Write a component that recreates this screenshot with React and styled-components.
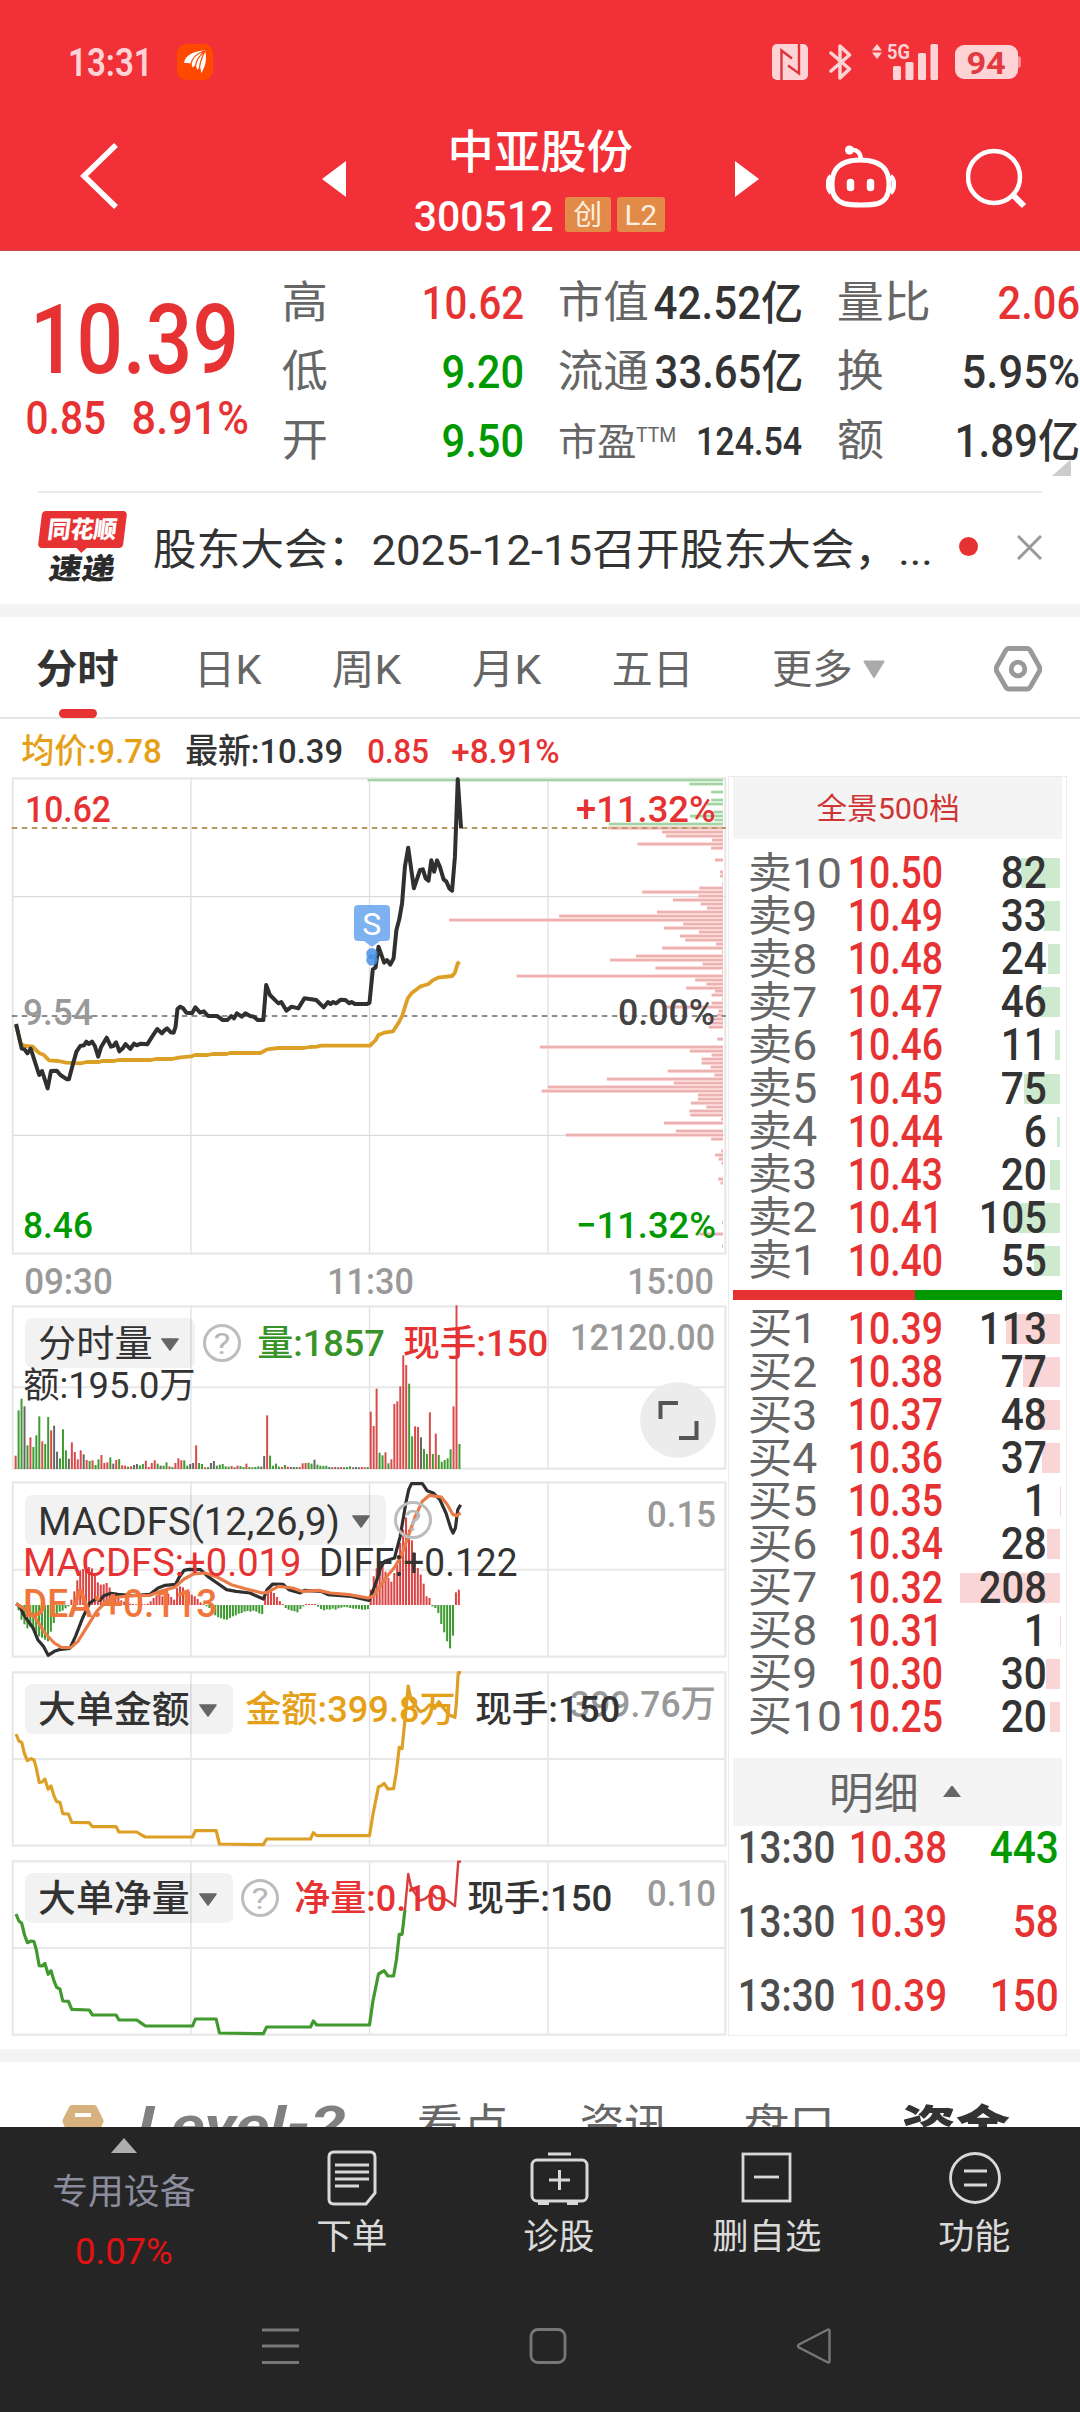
import React, { useLayoutEffect, useRef, useState } from "react";
import styled, { createGlobalStyle } from "styled-components";

const RED = "#e63232";
const GREEN = "#009900";
const INK = "#333333";
const GREY = "#666666";
const SOFT = "#999999";
const AMBER = "#e6a017";

const Global = createGlobalStyle`
  * { box-sizing: border-box; }
  body { margin: 0; background: #fff; }
  body, #root { font-family: Roboto, "Noto Sans CJK SC", sans-serif; }
`;

/* ---------- condensed text that fills a given width ---------- */

const FitBox = styled.span`
  display: block;
  flex: none;
  width: ${(p) => p.$w}px;
  height: ${(p) => Math.round(p.$size * 1.2)}px;
  line-height: ${(p) => Math.round(p.$size * 1.2)}px;
  margin-left: ${(p) => p.$ml || 0}px;
  font-size: ${(p) => p.$size}px;
  font-weight: ${(p) => p.$weight || 400};
  font-style: ${(p) => (p.$italic ? "italic" : "normal")};
  color: ${(p) => p.$color || INK};
  white-space: nowrap;
`;

const FitInner = styled.span`
  display: inline-block;
  transform-origin: 0 50%;
`;

function Fit({ w, size, weight, color, ml, italic, children }) {
  const ref = useRef(null);
  const [k, setK] = useState(1);
  const bearing = size * 0.052;
  useLayoutEffect(() => {
    const natural = ref.current.offsetWidth;
    if (natural) setK((w + bearing * 1.8) / natural);
  }, [w, bearing]);
  return (
    <FitBox $w={w} $size={size} $weight={weight} $color={color} $ml={ml} $italic={italic}>
      <FitInner ref={ref} style={{ transform: `translate(${-bearing}px, 1px) scaleX(${k})` }}>
        {children}
      </FitInner>
    </FitBox>
  );
}

/* ---------- page ---------- */

const Page = styled.div`
  width: 1080px;
  height: 2412px;
  overflow: hidden;
  background: #fff;
  display: flex;
  flex-direction: column;
`;

const Header = styled.header`
  flex: none;
  height: 251px;
  background: #f23037;
  border-bottom: 1px solid #cf4a50;
`;

const StatusBar = styled.div`
  display: flex;
  align-items: center;
  height: 124px;
  padding: 0 62px 0 70px;
`;

const AppBadge = styled.span`
  display: flex;
  width: 36px;
  height: 36px;
  margin-left: 26px;
  border-radius: 9px;
  background: #ff4800;
`;

const StatusIcons = styled.div`
  display: flex;
  align-items: center;
  margin-left: auto;
`;

const Battery = styled.span`
  position: relative;
  display: flex;
  align-items: center;
  justify-content: center;
  width: 63px;
  height: 34px;
  margin-left: 17px;
  border-radius: 9px;
  background: #fed3d5;
  &::after {
    content: "";
    position: absolute;
    right: -3px;
    top: 11px;
    width: 3px;
    height: 12px;
    border-radius: 0 4px 4px 0;
    background: #f98f93;
  }
`;

const TitleBar = styled.div`
  display: flex;
  align-items: flex-start;
  height: 126px;
  padding-left: 79px;
  svg { flex: none; display: block; }
`;

const TitleIcon = styled.div`
  margin: ${(p) => p.$mt}px 0 0 ${(p) => p.$ml}px;
`;

const TitleBlock = styled.div`
  display: flex;
  flex-direction: column;
  align-items: center;
  width: 251px;
  margin-left: 69px;
  margin-right: 1px;
`;

const CodeRow = styled.div`
  display: flex;
  align-items: center;
  height: 53px;
  margin-top: 9px;
`;

const Mark = styled.span`
  display: flex;
  align-items: center;
  justify-content: center;
  width: ${(p) => p.$w}px;
  height: 35px;
  margin-left: ${(p) => p.$ml}px;
  border-radius: 3px;
  background: #e28b48;
`;

/* ---------- quote ---------- */

const Quote = styled.section`
  flex: none;
  display: flex;
  height: 240px;
  position: relative;
`;

const LastPrice = styled.div`
  width: 284px;
  padding-top: 31px;
`;

const BigPrice = styled.div`
  padding-left: 35px;
  height: 108px;
`;

const ChangeRow = styled.div`
  display: flex;
  padding-left: 28px;
`;

const Stats = styled.div`
  width: ${(p) => p.$w}px;
  margin-right: ${(p) => p.$mr || 0}px;
  padding-top: 17px;
`;

const Stat = styled.div`
  display: flex;
  align-items: center;
  justify-content: space-between;
  height: 69px;
`;

const LabelGroup = styled.div`
  display: flex;
  align-items: center;
`;

const Super = styled.span`
  padding-bottom: 14px;
`;

const Corner = styled.svg`
  position: absolute;
  right: 9px;
  top: 208px;
`;

const Notice = styled.section`
  flex: none;
  display: flex;
  align-items: center;
  height: 113px;
  margin: 0 38px;
  border-top: 2px solid #ececec;
`;

const Brand = styled.div`
  width: 89px;
  height: 78px;
  flex: none;
  display: flex;
  flex-direction: column;
  align-items: center;
  margin-top: -4px;
`;

const BrandTop = styled.div`
  position: relative;
  display: flex;
  align-items: center;
  justify-content: center;
  width: 85px;
  height: 37px;
  margin-top: 3px;
  border-radius: 4px;
  background: ${RED};
  transform: skewX(-7deg);
  &::after {
    content: "";
    position: absolute;
    left: 38px;
    top: 36px;
    border: 6px solid transparent;
    border-top-color: ${RED};
    border-bottom: 0;
  }
`;

const BrandBottom = styled.div`
  margin-top: 3px;
  transform: skewX(-9deg);
`;

const Dot = styled.span`
  flex: none;
  width: 19px;
  height: 19px;
  margin: 0 39px 4px 28px;
  border-radius: 50%;
  background: ${RED};
`;

const CloseIcon = styled.svg`
  flex: none;
  margin-bottom: 3px;
`;

const Band = styled.div`
  flex: none;
  height: 13px;
  background: #f4f4f4;
`;

const Tabs = styled.nav`
  flex: none;
  display: flex;
  height: 102px;
  padding-left: 38px;
  align-items: center;
  border-bottom: 2px solid #e6e6e6;
`;

const Tab = styled.div`
  position: relative;
  display: flex;
  align-items: center;
  height: 100px;
  padding-top: 4px;
  margin-left: ${(p) => p.$ml || 0}px;
  &::after {
    content: "";
    display: ${(p) => (p.$active ? "block" : "none")};
    position: absolute;
    left: 21px;
    bottom: -1px;
    width: 38px;
    height: 9px;
    border-radius: 5px;
    background: ${RED};
  }
`;

const Legend = styled.div`
  flex: none;
  display: flex;
  align-items: center;
  height: 57px;
  padding: 6px 0 0 23px;
`;

const Board = styled.main`
  flex: none;
  display: flex;
  height: 1273px;
`;

/* ---------- charts ---------- */

const Charts = styled.div`
  width: 714px;
  margin: 2px 2px 0 12px;
`;

const Panel = styled.div`
  position: relative;
  height: ${(p) => p.$h}px;
  margin-top: ${(p) => p.$mt || 0}px;
`;

const Canvas = styled.svg`
  display: block;
  width: 714px;
  height: 100%;
  overflow: visible;
`;

const TextLayer = styled.div`
  position: absolute;
  inset: 0;
  padding: ${(p) => p.$pt}px 12px 0 13px;
  display: flex;
  flex-direction: column;
`;

const Spread = styled.div`
  display: flex;
  justify-content: space-between;
  margin-top: ${(p) => p.$mt || 0}px;
`;

const TimeAxis = styled.div`
  display: flex;
  justify-content: space-between;
  align-items: center;
  height: 52px;
  padding: 2px 14px 0 14px;
`;

const Row = styled.div`
  display: flex;
  align-items: center;
  height: ${(p) => p.$h}px;
`;

const Picker = styled.div`
  display: flex;
  align-items: center;
  justify-content: space-between;
  flex: none;
  width: ${(p) => p.$w}px;
  height: 50px;
  padding: 2px 16px 0 15px;
  border-radius: 7px;
  background: rgba(0, 0, 0, 0.052);
`;

const Help = styled.span`
  display: flex;
  align-items: center;
  justify-content: center;
  flex: none;
  width: 38px;
  height: 38px;
  margin-left: ${(p) => p.$ml}px;
  border: 3px solid #bdbdbd;
  border-radius: 50%;
`;

const AxisMax = styled.div`
  position: absolute;
  right: 12px;
  top: ${(p) => p.$top}px;
`;

const Expand = styled.button`
  position: absolute;
  right: 10px;
  top: 76px;
  width: 76px;
  height: 76px;
  padding: 0;
  border: 0;
  border-radius: 50%;
  background: #ececec;
`;

const SellFlag = styled.div`
  position: absolute;
  left: 342px;
  top: 127px;
  width: 36px;
  height: 36px;
  display: flex;
  align-items: center;
  justify-content: center;
  border-radius: 4px;
  background: #7db1f0;
  &::after {
    content: "";
    position: absolute;
    left: 10px;
    top: 36px;
    border: 8px solid transparent;
    border-top: 6px solid #7db1f0;
    border-bottom: 0;
  }
`;

/* ---------- order book ---------- */

const Book = styled.aside`
  width: 339px;
  height: 1260px;
  border: 1px solid #ebebeb;
  padding: 0 4px;
`;

const BookHead = styled.div`
  display: flex;
  align-items: center;
  height: ${(p) => p.$h}px;
  margin-top: ${(p) => p.$mt || 0}px;
  padding-top: ${(p) => p.$pt || 0}px;
  padding-left: ${(p) => p.$pl}px;
  background: #f4f4f4;
`;

const Levels = styled.div`
  margin-top: ${(p) => p.$mt}px;
`;

const Level = styled.div`
  display: flex;
  align-items: center;
  height: 43.1px;
  padding-left: 17px;
`;

const LevelName = styled.div`
  width: 100px;
`;

const Volume = styled.div`
  position: relative;
  display: flex;
  align-items: center;
  justify-content: flex-end;
  width: 119px;
  height: 43px;
  padding-right: 15px;
  isolation: isolate;
`;

const VolumeBar = styled.i`
  position: absolute;
  z-index: -1;
  right: 0;
  top: 7px;
  height: 30px;
  background: ${(p) => (p.$sell ? "#cde9ce" : "#fad5d5")};
`;

const Ratio = styled.div`
  height: 10px;
  margin-top: 8px;
  background: linear-gradient(90deg, ${RED} 55.2%, ${GREEN} 55.2%);
`;

const Trades = styled.div`
  display: flex;
  flex-direction: column;
  gap: 30px;
`;

const Trade = styled.div`
  display: flex;
  align-items: center;
  height: 44px;
  padding: 0 5px 0 7px;
  > :last-child { margin-left: auto; }
`;

/* ---------- lower part ---------- */

const SubTabs = styled.div`
  flex: none;
  display: flex;
  height: 65px;
  overflow: hidden;
  padding: 37px 0 0 62px;
`;

const Level2 = styled.div`
  margin: -5px 0 0 36px;
`;

const Dock = styled.footer`
  flex: none;
  height: 285px;
  background: #252525;
`;

const DockItems = styled.div`
  display: flex;
  height: 170px;
`;

const DeviceCell = styled.div`
  width: 248px;
  display: flex;
  flex-direction: column;
  align-items: center;
  gap: 16px;
  padding-top: 11px;
  svg { margin-bottom: 2px; }
`;

const DockItem = styled.div`
  width: ${(p) => p.$w}px;
  display: flex;
  flex-direction: column;
  align-items: center;
  gap: 8px;
  padding-top: 21px;
`;

const SystemNav = styled.div`
  display: flex;
  justify-content: space-between;
  padding: 30px 248px 0 261px;
`;

/* ---------- data ---------- */

const PRICE = "34,762 46,836 52,838 58,850 65,836 83,915 89,903 101,955 108,903 120,902 128,915 142,928 146,928 155,880 162,845 170,828 178,826 183,815 188,822 195,815 201,828 208,860 214,832 226,803 235,830 240,828 246,817 253,844 260,835 266,822 276,837 284,821 290,826 298,821 312,823 320,805 333,777 343,790 348,782 354,775 362,787 368,788 372,770 376,717 382,710 388,715 395,728 407,730 414,712 424,728 432,724 441,738 460,738 472,750 482,750 490,738 496,745 502,730 512,740 520,730 530,738 538,740 546,750 558,750 564,645 572,675 584,692 590,700 596,696 607,722 618,710 632,715 645,685 670,690 686,712 695,696 700,702 706,696 712,700 722,689 732,690 740,700 745,696 752,702 778,702 783,698 790,598 796,592 802,530 814,578 820,570 827,584 834,565 840,480 846,448 852,400 858,290 865,233 877,355 890,300 896,298 902,325 908,332 914,271 920,305 926,271 932,290 940,328 946,335 952,355 958,362 964,260 970,28 977,175";
const AVERAGE = "34,765 44,822 54,828 70,830 76,840 84,850 92,854 104,871 124,873 140,878 170,880 184,876 210,876 216,873 242,873 250,870 320,870 330,867 365,867 378,863 405,859 414,855 440,855 450,852 480,852 488,849 552,849 566,838 590,834 644,834 656,831 672,830 680,827 784,827 796,810 802,795 814,788 833,784 846,755 852,738 864,685 872,670 890,650 908,642 916,632 928,623 958,618 964,608 970,580 974,576";
const DEALS_UP = [[30,779],[42,1461],[66,1507],[90,1507],[102,1498],[126,1512],[138,1462],[150,1514],[162,1290]];
const DEALS_DOWN = [[174,1288],[186,1403],[198,1411],[210,1509],[222,1351],[234,1507],[270,1515],[306,1526],[318,1526],[342,1530],[354,1482],[366,1361],[378,1480],[390,1426],[402,1485],[414,1498],[426,1392],[438,1185],[450,952],[462,1448],[474,1407],[486,1481],[498,1441],[510,1452],[522,1517],[534,1403],[546,1530],[558,1348],[570,1293],[582,1489],[594,1389],[606,1530],[618,1095],[630,1473],[642,1497],[654,1454],[663,1515],[675,1508],[687,1530],[699,1508],[711,1405],[723,1523],[735,1520],[747,1500],[759,1508],[771,1502],[807,1520],[831,1144],[843,1462],[855,1508],[867,1487],[879,1487],[891,1506],[903,1415],[915,1514],[927,1286],[939,1428],[951,1161],[963,1148],[975,1479],[987,1479],[999,1464],[1011,1497],[1023,1461],[1035,1463],[1047,1528],[1059,1407],[1083,1432],[1095,1199],[1107,1507],[1143,1528],[1155,1515],[1167,1523],[1179,1529],[1227,1522],[1239,1527],[1359,1530],[1392,1482],[1428,1530]];

const VOLUME = "r496 g360 g325 k348 g465 r441 g470 g435 g378 r453 g461 g380 r420 k406 k484 g504 g417 g480 k505 r456 r485 r507 r480 k492 r509 g512 r510 g524 g507 r494 r518 r516 g501 k520 r509 g506 r525 r526 g529 r528 k524 k521 g525 g521 r511 r530 r518 r510 g520 k526 g526 g516 r528 g530 r518 r504 r510 g510 g526 k521 k518 r465 g518 g521 r531 g530 k518 k512 g526 g523 g521 g528 g529 r527 k531 r526 g527 g530 r520 g530 g531 g530 g528 k529 k497 r375 g496 g526 g520 g529 r530 g524 r529 k530 k530 g530 r530 r519 r518 g517 g520 k508 g523 g526 g527 g526 k530 k531 r530 k531 r530 k531 g530 g528 k531 k530 k531 r530 r531 g530 r364 r407 r295 g487 g495 r486 g519 r507 r341 r333 r288 r195 r224 g280 g438 r408 r410 k441 g476 g491 r366 g491 r430 g494 g514 g509 g504 g477 r348 r45 g461".split(" ");
const MACD = [962,990,1004,1016,1010,1020,1030,1040,1044,1050,1055,1026,1000,975,966,963,956,950,930,905,872,842,838,835,832,836,850,878,885,884,880,893,910,915,925,932,936,938,942,943,944,944,943,944,942,935,925,917,918,920,915,912,922,930,895,890,893,903,905,915,920,928,938,943,950,955,966,977,983,986,989,990,985,980,977,972,970,966,964,966,963,966,971,973,915,905,900,910,922,934,943,955,960,963,965,968,958,950,943,943,943,943,951,958,962,959,960,957,960,956,954,952,953,955,957,957,958,960,960,958,900,860,836,815,820,846,865,876,850,825,760,720,683,720,752,790,835,855,882,920,925,950,955,970,1003,1028,1055,1076,1038,908,900];
const DIFF = "34,942 42,950 50,975 60,995 70,1015 80,1050 92,1070 102,1097 115,1085 125,1080 148,1076 160,1040 175,985 190,940 203,928 212,932 220,918 235,911 250,914 280,918 318,914 335,895 350,887 372,884 380,862 390,842 400,839 425,840 440,860 460,880 480,900 500,905 530,910 540,917 558,928 566,900 578,883 600,884 612,900 636,910 645,902 680,905 695,915 745,920 782,932 790,905 800,865 806,835 815,815 836,805 848,740 860,640 866,600 872,582 895,582 905,603 918,610 932,630 945,670 955,715 960,730 965,715 970,660 976,645";
const DEA = "34,942 60,965 75,985 95,1030 115,1060 130,1073 150,1074 165,1055 185,1010 205,965 225,935 250,922 280,918 318,917 340,905 370,893 390,868 410,853 435,850 460,862 490,885 520,897 555,910 566,908 590,890 620,895 640,905 675,902 700,910 740,915 780,925 792,918 805,890 820,860 835,835 850,800 865,740 880,680 895,635 910,617 935,622 948,645 960,675 968,678 976,670";
const AMOUNT = "34,222 40,243 46,247 52,282 58,302 66,296 72,300 77,325 83,367 89,366 95,357 102,388 108,378 115,410 120,425 127,427 133,461 145,462 152,487 189,488 196,500 246,500 252,516 290,516 300,525 308,531 408,531 414,512 458,512 465,552 558,554 565,537 658,537 664,518 671,527 783,527 790,465 802,380 808,377 814,370 822,387 834,386 840,335 846,262 852,266 858,180 865,78 871,120 877,130 890,155 900,150 910,135 921,145 930,125 940,145 952,165 964,172 967,130 971,38 977,38";
const NET_DOWN = "34,762 40,783 46,790 52,825 58,848 66,843 72,845 77,870 83,917 89,918 95,910 102,943 108,932 115,965 120,982 127,987 133,1023 145,1024 152,1048 189,1050 196,1065 246,1065 252,1080 290,1080 300,1090 308,1098 408,1098 414,1077 458,1077 465,1119 558,1121 565,1101 658,1101 664,1083 671,1095 783,1095 790,1025 802,942 814,932 822,948 834,948 840,900 846,823 852,823 858,750";
const NET_UP = "858,750 865,642 871,680 877,695 890,722 900,717 915,700 925,715 940,715 952,725 964,738 971,605 977,605";

const SELLS = [["10","10.50",82],["9","10.49",33],["8","10.48",24],["7","10.47",46],["6","10.46",11],["5","10.45",75],["4","10.44",6],["3","10.43",20],["2","10.41",105],["1","10.40",55]];
const BUYS = [["1","10.39",113],["2","10.38",77],["3","10.37",48],["4","10.36",37],["5","10.35",1],["6","10.34",28],["7","10.32",208],["8","10.31",1],["9","10.30",30],["10","10.25",20]];
const TRADES = [["10.38","443",GREEN],["10.39","58",RED],["10.39","150",RED]];

/* ---------- pieces ---------- */

const Line = (p) => <polyline fill="none" strokeLinejoin="round" vectorEffect="non-scaling-stroke" {...p} />;

function Grid({ top, bottom, rows }) {
  const s = { vectorEffect: "non-scaling-stroke", stroke: "#dfdfdf", strokeWidth: 1.3 };
  return (
    <g fill="none">
      {[404.5, 783, 1161.5].map((x) => <line key={x} x1={x} x2={x} y1={top} y2={bottom} {...s} />)}
      {rows.map((y) => <line key={y} x1="25" x2="1539" y1={y} y2={y} {...s} strokeWidth={rows.length > 1 ? 1.3 : 2} stroke={rows.length > 1 ? "#dcdcdc" : "#e8e8e8"} />)}
      <rect x="27" y={top + 1} width="1510" height={bottom - top - 2} {...s} stroke="#e8e8e8" strokeWidth="2.2" />
    </g>
  );
}

function Deals({ rows, light, dark }) {
  return rows.map(([y, x]) => (
    <g key={y}>
      <rect x={x} y={y - 5} width={1532 - x} height="10.5" fill={light} />
      <rect x={x} y={y - 2.7} width={1532 - x} height="5.4" fill={dark} />
    </g>
  ));
}

const Caret = () => (
  <svg width="18" height="13" viewBox="0 0 18 13"><path d="M1 1h16L9 12z" fill="#666" stroke="#666" strokeWidth="1.6" strokeLinejoin="round" /></svg>
);

const HelpMark = ({ ml }) => (
  <Help $ml={ml}><Fit w={14} size={30} color="#b8b8b8">?</Fit></Help>
);

function LevelRow({ side, row }) {
  const [n, price, vol] = row;
  const digits = String(vol).length;
  return (
    <Level>
      <LevelName><Fit w={n === "10" ? 90 : 66} size={42} color={GREY}>{side}{n}</Fit></LevelName>
      <Fit w={91} size={44} weight={500} color={RED}>{price}</Fit>
      <Volume>
        <VolumeBar $sell={side === "卖"} style={{ width: vol * 0.48 }} />
        <Fit w={[19, 42, 64][digits - 1]} size={44} weight={500}>{vol}</Fit>
      </Volume>
    </Level>
  );
}

const statFont = { size: 46, weight: 500 };

export default function App() {
  return (
    <Page>
      <Global />
      <Header>
        <StatusBar>
          <Fit w={81} size={38} weight={600} color="#fed3d5">13:31</Fit>
          <AppBadge>
            <svg width="36" height="36" viewBox="0 0 36 36">
              <path d="M7 19C8 11 17 7 28 6.500C30 14 29 22 24 29.500C24 26 24 25 22.500 23L20.500 26L18.500 21L15.500 23.500L14.500 19.500C11 19 9 19 7 19Z" fill="#fff" />
              <path d="M27 7C19 10 15 14 14 20M28 7C22 12 19 16 18.500 22M28 7C25 13 23 18 22.500 24" stroke="#ff4800" strokeWidth="1.200" fill="none" />
            </svg>
          </AppBadge>
          <StatusIcons>
            <svg width="166" height="36" viewBox="0 0 166 36">
              <rect width="36" height="36" rx="5" fill="#fed3d5" />
              <path d="M9.500 36V6.500L20 14.500M27 0V29.500L16 21.500" fill="none" stroke="#e0323a" strokeWidth="2.400" />
              <path d="M59 9L77.500 25L68 34V2L77.500 11L59 27" fill="none" stroke="#fed3d5" strokeWidth="3.500" strokeLinejoin="round" strokeLinecap="round" />
              <path d="M100 6.500L105 0L110 6.500zM100 8.500H110L105 15z" fill="#fed3d5" />
              <g fill="#fed3d5">
                <rect x="121" y="22" width="8" height="14" rx="1.500" />
                <rect x="133.500" y="18" width="8" height="18" rx="1.500" />
                <rect x="146" y="9" width="8" height="27" rx="1.500" />
                <rect x="158.500" y="0" width="7.500" height="36" rx="1.500" />
              </g>
              <text x="115" y="15" fontSize="20" fontWeight="700" textLength="23" lengthAdjust="spacingAndGlyphs" fill="#fed3d5">5G</text>
            </svg>
            <Battery><Fit w={37} size={31} weight={700} color="#e23a41">94</Fit></Battery>
          </StatusIcons>
        </StatusBar>
        <TitleBar>
          <TitleIcon $mt={19} $ml={0}>
            <svg width="40" height="66" viewBox="0 0 40 66"><path d="M37 2L5 33L37 64" fill="none" stroke="#fff" strokeWidth="5.500" /></svg>
          </TitleIcon>
          <TitleIcon $mt={37} $ml={203}>
            <svg width="24" height="36" viewBox="0 0 24 36"><path d="M24 0V36L0 18z" fill="#fff" /></svg>
          </TitleIcon>
          <TitleBlock>
            <Fit w={181} size={46} weight={500} color="#fff">中亚股份</Fit>
            <CodeRow>
              <Fit w={136} size={43} weight={500} color="#fff">300512</Fit>
              <Mark $w={46} $ml={13}><Fit w={26} size={28} color="#fff0e0">创</Fit></Mark>
              <Mark $w={48} $ml={6}><Fit w={30} size={28} color="#fff0e0">L2</Fit></Mark>
            </CodeRow>
          </TitleBlock>
          <TitleIcon $mt={37} $ml={68}>
            <svg width="24" height="36" viewBox="0 0 24 36"><path d="M0 0V36L24 18z" fill="#fff" /></svg>
          </TitleIcon>
          <TitleIcon $mt={21} $ml={67}>
            <svg width="70" height="64" viewBox="0 0 70 64" fill="none" stroke="#fff">
              <path d="M34 15C45 15 54 17 59.500 25C62 29 63 34 63 40C63 49 60 56 52 58.500C45 60.500 25 60.500 18 58.500C10 56 6 49 6 40C6 34 7 29 9.500 25C15 17 24 15 34 15Z" strokeWidth="5" />
              <path d="M34.500 14C35 8 31 4 24 5" strokeWidth="4.500" />
              <circle cx="23.500" cy="5" r="4.500" fill="#fff" stroke="none" />
              <path d="M24.500 37.500v5M44.500 37.500v5" strokeWidth="7.500" strokeLinecap="round" />
              <path d="M5 31C1 34 1 44 5 48M64.500 31C69 34 69 44 64.500 48" strokeWidth="4.500" />
            </svg>
          </TitleIcon>
          <TitleIcon $mt={24} $ml={70}>
            <svg width="61" height="62" viewBox="0 0 61 62" fill="none" stroke="#fff" strokeWidth="4.500"><circle cx="28" cy="29" r="26" /><path d="M48 48L58 58" strokeWidth="6" /></svg>
          </TitleIcon>
        </TitleBar>
      </Header>

      <Quote>
        <LastPrice>
          <BigPrice><Fit w={200} size={96} weight={500} color={RED}>10.39</Fit></BigPrice>
          <ChangeRow>
            <Fit w={76} size={46} weight={500} color={RED}>0.85</Fit>
            <Fit w={113} size={46} weight={500} color={RED} ml={30}>8.91%</Fit>
          </ChangeRow>
        </LastPrice>
        <Stats $w={238} $mr={38}>
          <Stat><Fit w={42} size={44} color={GREY}>高</Fit><Fit w={98} {...statFont} color={RED}>10.62</Fit></Stat>
          <Stat><Fit w={42} size={44} color={GREY}>低</Fit><Fit w={78} {...statFont} color={GREEN}>9.20</Fit></Stat>
          <Stat><Fit w={42} size={44} color={GREY}>开</Fit><Fit w={78} {...statFont} color={GREEN}>9.50</Fit></Stat>
        </Stats>
        <Stats $w={241} $mr={38}>
          <Stat><Fit w={87} size={44} color={GREY}>市值</Fit><Fit w={145} {...statFont}>42.52亿</Fit></Stat>
          <Stat><Fit w={87} size={44} color={GREY}>流通</Fit><Fit w={144} {...statFont}>33.65亿</Fit></Stat>
          <Stat>
            <LabelGroup>
              <Fit w={75} size={38} color={GREY}>市盈</Fit>
              <Super><Fit w={38} size={20} color={GREY} ml={2}>TTM</Fit></Super>
            </LabelGroup>
            <Fit w={103} size={38} weight={500}>124.54</Fit>
          </Stat>
        </Stats>
        <Stats $w={239}>
          <Stat><Fit w={90} size={44} color={GREY}>量比</Fit><Fit w={78} {...statFont} color={RED}>2.06</Fit></Stat>
          <Stat><Fit w={43} size={44} color={GREY}>换</Fit><Fit w={114} {...statFont}>5.95%</Fit></Stat>
          <Stat><Fit w={43} size={44} color={GREY}>额</Fit><Fit w={121} {...statFont}>1.89亿</Fit></Stat>
        </Stats>
        <Corner width="19" height="17" viewBox="0 0 19 17"><path d="M19 0V17H0z" fill="#ccc" /></Corner>
      </Quote>

      <Notice>
        <Brand>
          <BrandTop><Fit w={67} size={24} weight={900} color="#fff">同花顺</Fit></BrandTop>
          <BrandBottom><Fit w={63} size={29} weight={900} color="#2b2b2b">速递</Fit></BrandBottom>
        </Brand>
        <Fit w={776} size={43} ml={28}>股东大会：2025-12-15召开股东大会，...</Fit>
        <Dot />
        <CloseIcon width="25" height="25" viewBox="0 0 25 25"><path d="M1 1L24 24M24 1L1 24" stroke="#999" strokeWidth="3" /></CloseIcon>
      </Notice>
      <Band />

      <Tabs>
        <Tab $active><Fit w={79} size={40} weight={700}>分时</Fit></Tab>
        <Tab $ml={79}><Fit w={64} size={41} color={GREY}>日K</Fit></Tab>
        <Tab $ml={74}><Fit w={66} size={41} color={GREY}>周K</Fit></Tab>
        <Tab $ml={74}><Fit w={66} size={41} color={GREY}>月K</Fit></Tab>
        <Tab $ml={74}><Fit w={78} size={41} color={GREY}>五日</Fit></Tab>
        <Tab $ml={82}><Fit w={77} size={40} color={GREY}>更多</Fit></Tab>
        <Tab $ml={12}><svg width="22" height="19" viewBox="0 0 22 19"><path d="M1.500 1.500h19L11 17z" fill="#aaa" stroke="#aaa" strokeWidth="2" strokeLinejoin="round" /></svg></Tab>
        <Tab $ml={109}>
          <svg width="48" height="46" viewBox="0 0 48 46" fill="none" stroke="#999" strokeWidth="4.800"><path d="M14.500 2.500H33.500Q35 2.500 36 4L45.500 21Q46 23 45.500 25L36 41.500Q35 43 33.500 43H14.500Q13 43 12 41.500L2.500 25Q2 23 2.500 21L12 4Q13 2.500 14.500 2.500Z" strokeLinejoin="round" /><circle cx="24" cy="23" r="6.800" /></svg>
        </Tab>
      </Tabs>

      <Legend>
        <Fit w={137} size={34} weight={500} color={AMBER}>均价:9.78</Fit>
        <Fit w={155} size={34} weight={500} ml={27}>最新:10.39</Fit>
        <Fit w={58} size={34} weight={500} color={RED} ml={27}>0.85</Fit>
        <Fit w={105} size={34} weight={500} color={RED} ml={26}>+8.91%</Fit>
      </Legend>

      <Board>
        <Charts>
          <Panel $h={476}>
            <Canvas viewBox="25.4 24 1513 1428" preserveAspectRatio="none">
              <Grid top={24} bottom={1452} rows={[380, 1096]} />
              <Deals rows={DEALS_UP} light="#c8efca" dark="#a3cfa5" />
              <Deals rows={DEALS_DOWN} light="#fccaca" dark="#e9b0b0" />
              <Line points="25,174 1538,174" stroke="#b59a62" strokeWidth="2" strokeDasharray="5.500 4.500" />
              <Line points="25,738 1538,738" stroke="#8c8c8c" strokeWidth="2" strokeDasharray="5.500 4.500" />
              <Line points={AVERAGE} stroke="#dda026" strokeWidth="3.800" />
              <Line points={PRICE} stroke="#303030" strokeWidth="4" />
              <ellipse cx="788" cy="551" rx="12" ry="17" fill="#4a90e8" opacity=".85" />
              <ellipse cx="788" cy="570" rx="12" ry="17" fill="#4a90e8" opacity=".85" />
            </Canvas>
            <TextLayer $pt={9}>
              <Spread><Fit w={82} size={37} weight={500} color={RED} ml={2}>10.62</Fit><Fit w={136} size={37} weight={500} color={RED}>+11.32%</Fit></Spread>
              <Spread $mt={159}><Fit w={66} size={37} weight={500} color={SOFT}>9.54</Fit><Fit w={94} size={37} weight={500} color="#444">0.00%</Fit></Spread>
              <Spread $mt={169}><Fit w={66} size={37} weight={500} color={GREEN}>8.46</Fit><Fit w={136} size={37} weight={500} color={GREEN}>−11.32%</Fit></Spread>
            </TextLayer>
            <SellFlag><Fit w={16} size={32} color="#fff">S</Fit></SellFlag>
          </Panel>
          <TimeAxis>
            <Fit w={85} size={36} weight={500} color={SOFT}>09:30</Fit>
            <Fit w={83} size={36} weight={500} color={SOFT}>11:30</Fit>
            <Fit w={83} size={36} weight={500} color={SOFT}>15:00</Fit>
          </TimeAxis>

          <Panel $h={163}>
            <Canvas viewBox="25.4 47 1513 489" preserveAspectRatio="none">
              <Grid top={47} bottom={536} rows={[291]} />
              {VOLUME.map((v, i) => (
                <rect key={i} x={31 + i * 6.27} y={+v.slice(1)} width="4.200" height={536 - v.slice(1)} fill={{ r: "#d94a4a", g: "#3f9a32", k: "#666" }[v[0]]} />
              ))}
            </Canvas>
            <TextLayer $pt={12}>
              <Row $h={50}>
                <Picker $w={170}><Fit w={111} size={37}>分时量</Fit><Caret /></Picker>
                <HelpMark ml={8} />
                <Fit w={124} size={36} weight={500} color="#389428" ml={18}>量:1857</Fit>
                <Fit w={142} size={36} weight={500} color={RED} ml={22}>现手:150</Fit>
              </Row>
              <Row $h={35}><Fit w={169} size={36}>额:195.0万</Fit></Row>
            </TextLayer>
            <AxisMax $top={9}><Fit w={142} size={37} weight={500} color={SOFT}>12120.00</Fit></AxisMax>
            <Expand>
              <svg width="76" height="76" viewBox="0 0 76 76"><path d="M20.500 37V21H38M56.500 39V56H39" fill="none" stroke="#555" strokeWidth="4" /></svg>
            </Expand>
          </Panel>

          <Panel $h={175} $mt={13}>
            <Canvas viewBox="25.4 577 1513 525" preserveAspectRatio="none">
              <Grid top={577} bottom={1102} rows={[840]} />
              {MACD.map((v, i) => (
                <rect key={i} x={37.2 + i * 6.22} y={Math.min(v, 946)} width="4.300" height={Math.abs(v - 946)} fill={v < 946 ? "#dc4444" : "#3f9a32"} />
              ))}
              <Line points={DIFF} stroke="#303030" strokeWidth="3.200" />
              <Line points={DEA} stroke="#ea7a46" strokeWidth="3.200" />
            </Canvas>
            <TextLayer $pt={13}>
              <Row $h={50}>
                <Picker $w={361}><Fit w={298} size={38}>MACDFS(12,26,9)</Fit><Caret /></Picker>
                <HelpMark ml={8} />
              </Row>
              <Row $h={34}>
                <Fit w={275} size={39} color={RED}>MACDFS:+0.019</Fit>
                <Fit w={195} size={39} ml={21}>DIFF:+0.122</Fit>
              </Row>
              <Row $h={48}><Fit w={191} size={39} weight={500} color="#f0763c">DEA:+0.113</Fit></Row>
            </TextLayer>
            <AxisMax $top={10}><Fit w={65} size={37} weight={500} color={SOFT}>0.15</Fit></AxisMax>
          </Panel>

          <Panel $h={174} $mt={15}>
            <Canvas viewBox="25.4 36 1513 522" preserveAspectRatio="none">
              <Grid top={36} bottom={558} rows={[297]} />
              <Line points={AMOUNT} stroke="#dda026" strokeWidth="3.200" />
            </Canvas>
            <AxisMax $top={10}><Fit w={142} size={37} weight={500} color={SOFT}>399.76万</Fit></AxisMax>
            <TextLayer $pt={12}>
              <Row $h={50}>
                <Picker $w={208}><Fit w={148} size={37} weight={500}>大单金额</Fit><Caret /></Picker>
                <Fit w={207} size={36} weight={500} color={AMBER} ml={14}>金额:399.8万</Fit>
                <Fit w={142} size={36} weight={500} ml={23}>现手:150</Fit>
              </Row>
            </TextLayer>
          </Panel>

          <Panel $h={174} $mt={15}>
            <Canvas viewBox="25.4 603 1513 522" preserveAspectRatio="none">
              <Grid top={603} bottom={1125} rows={[864]} />
              <Line points={NET_DOWN} stroke="#41992f" strokeWidth="3.200" />
              <Line points={NET_UP} stroke="#d83c3c" strokeWidth="2.400" />
            </Canvas>
            <TextLayer $pt={12}>
              <Row $h={50}>
                <Picker $w={208}><Fit w={148} size={37} weight={500}>大单净量</Fit><Caret /></Picker>
                <HelpMark ml={8} />
                <Fit w={150} size={36} weight={500} color={RED} ml={17}>净量:0.10</Fit>
                <Fit w={142} size={36} weight={500} ml={23}>现手:150</Fit>
              </Row>
            </TextLayer>
            <AxisMax $top={10}><Fit w={65} size={37} weight={500} color={SOFT}>0.10</Fit></AxisMax>
          </Panel>
        </Charts>

        <Book>
          <BookHead $h={62} $pl={85}><Fit w={141} size={30} color="#cf3434">全景500档</Fit></BookHead>
          <Levels $mt={12}>{SELLS.map((r) => <LevelRow key={r[0]} side="卖" row={r} />)}</Levels>
          <Ratio />
          <Levels $mt={7}>{BUYS.map((r) => <LevelRow key={r[0]} side="买" row={r} />)}</Levels>
          <BookHead $h={68} $mt={20} $pt={3} $pl={98}>
            <Fit w={86} size={43} color={GREY}>明细</Fit>
            <svg width="44" height="14" viewBox="-26 2 44 14"><path d="M0 12L9 0L18 12z" transform="translate(0 1)" fill="#666" /></svg>
          </BookHead>
          <Trades>
            {TRADES.map(([price, vol, color], i) => (
              <Trade key={i}>
                <Fit w={94} size={44} weight={500} color="#4d4d4d">13:30</Fit>
                <Fit w={94} size={44} weight={500} color={RED} ml={17}>{price}</Fit>
                <Fit w={vol.length === 3 ? 65 : 42} size={44} weight={500} color={color}>{vol}</Fit>
              </Trade>
            ))}
          </Trades>
        </Book>
      </Board>
      <Band />

      <SubTabs>
        <svg width="42" height="40" viewBox="0 0 42 40"><path d="M10 6H32Q34 6 35 8L41 20Q42 22 41 24L35 38H7L1 24Q0 22 1 20L7 8Q8 6 10 6Z" fill="#d8b27e" /><rect x="13" y="14" width="16" height="4" fill="#fff" /></svg>
        <Level2><Fit w={204} size={50} weight={700} italic color="#808080">Level-2</Fit></Level2>
        <Fit w={88} size={44} color={GREY} ml={75}>看点</Fit>
        <Fit w={85} size={44} color={GREY} ml={75}>资讯</Fit>
        <Fit w={87} size={44} color={GREY} ml={79}>盘口</Fit>
        <Fit w={104} size={48} weight={900} ml={71}>资金</Fit>
      </SubTabs>

      <Dock>
        <DockItems>
          <DeviceCell>
            <svg width="26" height="15" viewBox="0 0 26 15"><path d="M13 0L26 15H0z" fill="#aeaeae" /></svg>
            <Fit w={140} size={35} color="#8b8d9e">专用设备</Fit>
            <Fit w={94} size={37} color="#e21212">0.07%</Fit>
          </DeviceCell>
          <DockItem $w={207}>
            <svg width="60" height="60" viewBox="0 0 60 60" fill="none" stroke="#d8d8d8" strokeWidth="3">
              <path d="M12 4H48Q53 4 53 9V45L44 56H12Q7 56 7 51V9Q7 4 12 4Z" /><path d="M13 17H47M13 24H47M13 31H47M13 38H37" />
            </svg>
            <Fit w={68} size={35} color="#dadada">下单</Fit>
          </DockItem>
          <DockItem $w={207}>
            <svg width="60" height="60" viewBox="0 0 60 60" fill="none" stroke="#d8d8d8" strokeWidth="3">
              <rect x="3" y="12" width="55" height="41" rx="5" /><path d="M19 6H42M30.500 22V42M20 32H41" /><path d="M9 55H20M38 55H49" strokeWidth="4" />
            </svg>
            <Fit w={68} size={35} color="#dadada">诊股</Fit>
          </DockItem>
          <DockItem $w={209}>
            <svg width="60" height="60" viewBox="0 0 60 60" fill="none" stroke="#d8d8d8" strokeWidth="2.800"><rect x="6" y="6" width="47" height="47" /><path d="M17 29H42" /></svg>
            <Fit w={106} size={35} color="#dadada">删自选</Fit>
          </DockItem>
          <DockItem $w={207}>
            <svg width="60" height="60" viewBox="0 0 60 60" fill="none" stroke="#d8d8d8" strokeWidth="2.800"><circle cx="30" cy="30" r="24.500" /><path d="M19 23H42M19 37H42" /></svg>
            <Fit w={69} size={35} color="#dadada">功能</Fit>
          </DockItem>
        </DockItems>
        <SystemNav>
          <svg width="39" height="38" viewBox="0 0 39 38"><path d="M1 3H38M1 19H38M1 35.500H38" stroke="#777" strokeWidth="3" /></svg>
          <svg width="40" height="38" viewBox="0 0 40 38"><rect x="3" y="2.500" width="34" height="33" rx="7" fill="none" stroke="#777" strokeWidth="2.800" /></svg>
          <svg width="36" height="38" viewBox="0 0 36 38"><path d="M33.500 4V34Q33.500 36.500 31 35L3 20.500Q1 19 3 17.500L31 3Q33.500 1.500 33.500 4Z" fill="none" stroke="#777" strokeWidth="2.400" /></svg>
        </SystemNav>
      </Dock>
    </Page>
  );
}
